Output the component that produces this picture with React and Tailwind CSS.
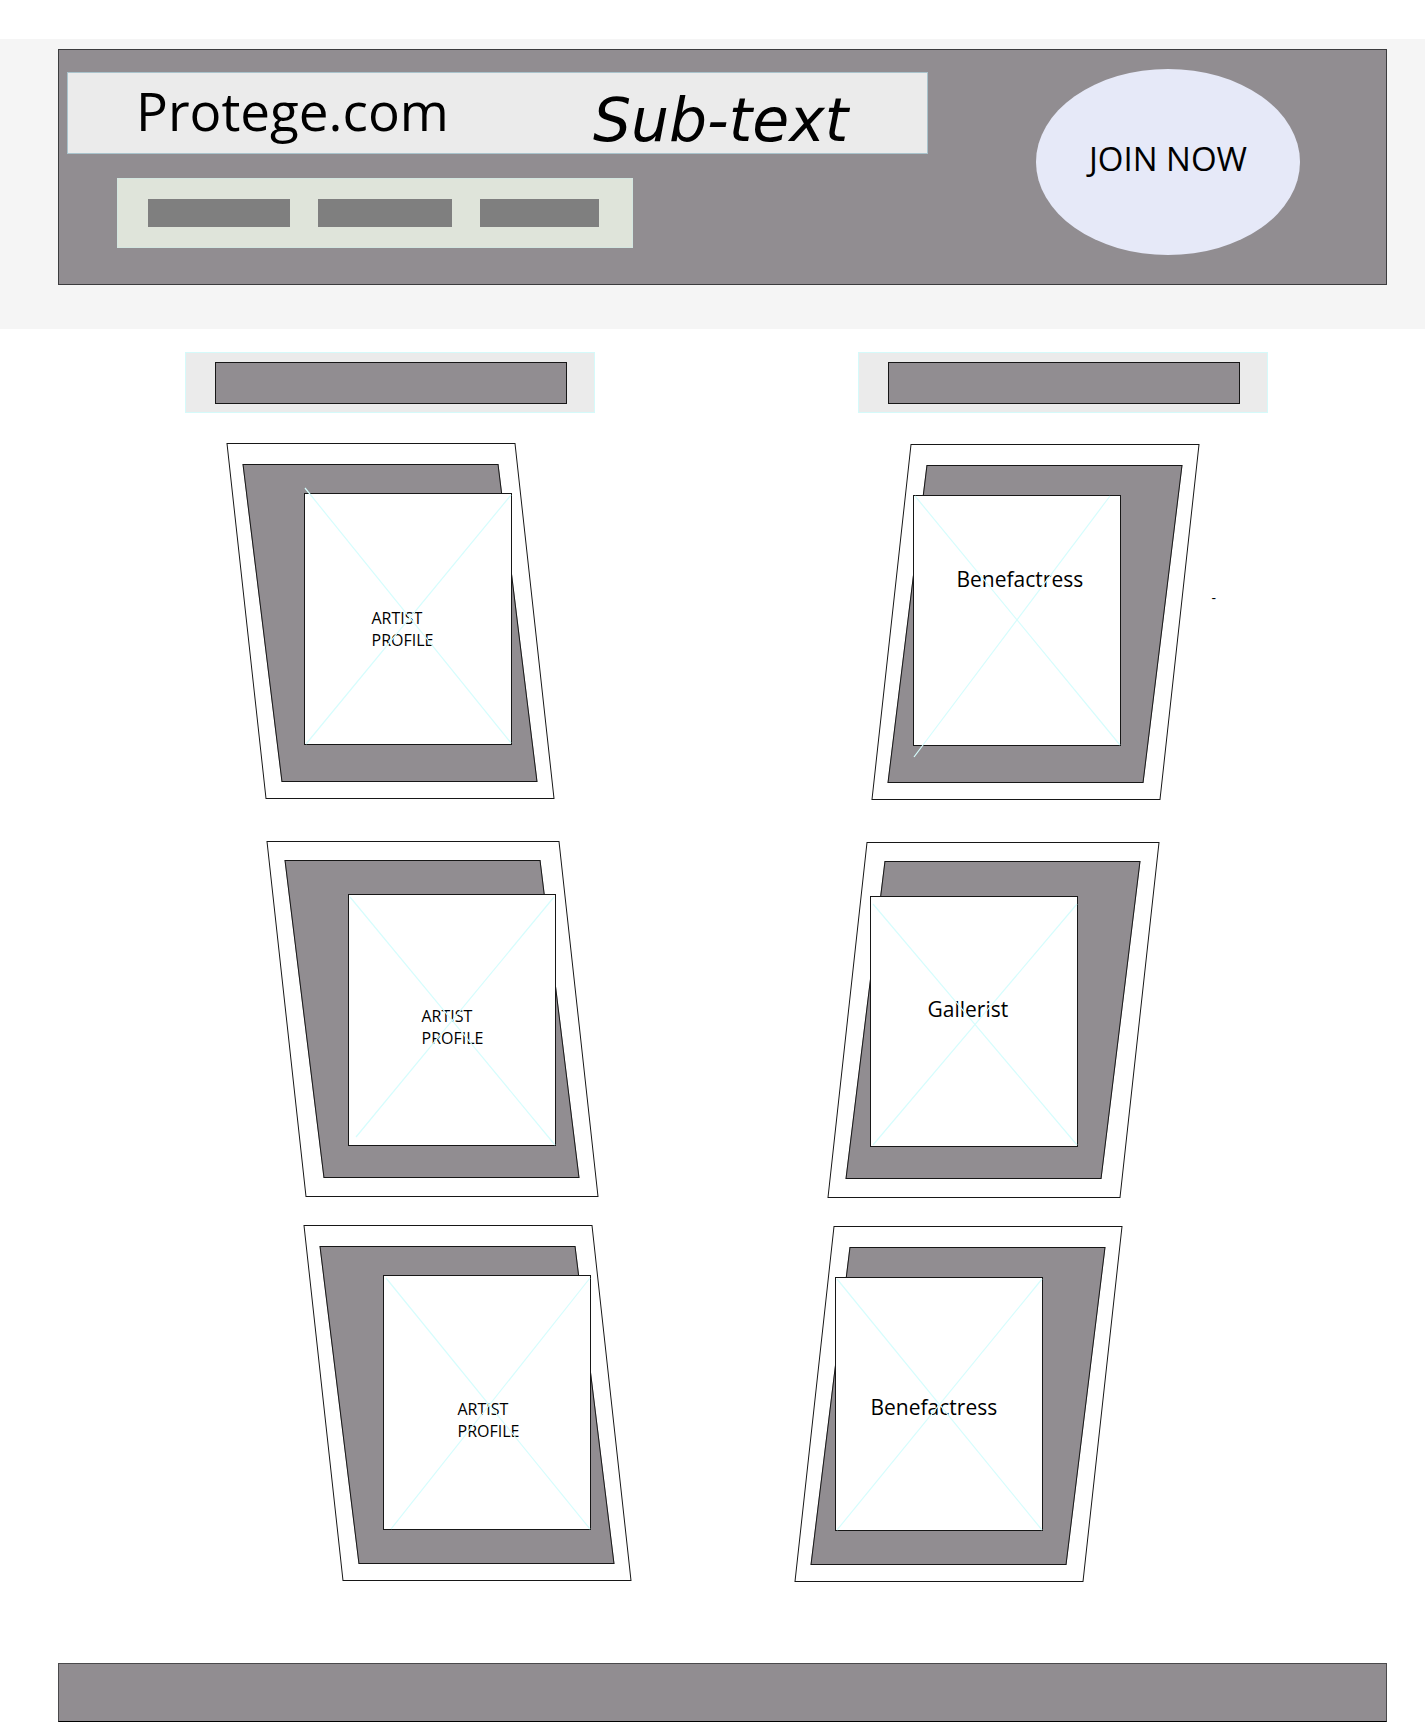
import React from "react";
import clsx from "clsx";

const artists = [
  {
    name: "ARTIST PROFILE",
    slot: "mt-[30px] ml-[61px] w-[289px]",
    panel: "mt-[21px] ml-4",
    sheet: "mt-[50px] ml-[58px] h-[252px]",
    label: "pt-[113px] pl-[67px]",
    lines: [[0, -6, 206, 249], [206, 1, 1, 250]],
  },
  {
    name: "ARTIST PROFILE",
    slot: "mt-[42px] ml-[101px] w-[293px]",
    panel: "mt-[19px] ml-[18px]",
    sheet: "mt-[53px] ml-[62px] h-[252px]",
    label: "pt-[110px] pl-[73px]",
    lines: [[1, 2, 206, 250], [205, 2, 7, 242]],
  },
  {
    name: "ARTIST PROFILE",
    slot: "mt-[28px] ml-[138px] w-[289px]",
    panel: "mt-[21px] ml-4",
    sheet: "mt-[50px] ml-[60px] h-[255px]",
    label: "pt-[122px] pl-[74px]",
    lines: [[2, 2, 206, 253], [206, 2, 7, 253]],
  },
];

const patrons = [
  {
    name: "Benefactress",
    slot: "mt-[31px] ml-[96px] w-[289px]",
    panel: "mt-[21px] ml-4",
    sheet: "mt-[51px] ml-[22px] h-[251px]",
    label: "pt-[69px] pl-[43px]",
    lines: [[1, 0, 206, 249], [196, 0, 0, 261]],
    note: "-",
  },
  {
    name: "Gallerist",
    slot: "mt-[42px] ml-[52px] w-[293px]",
    panel: "mt-[19px] ml-[18px]",
    sheet: "mt-[54px] ml-[23px] h-[251px]",
    label: "pt-[98px] pl-[57px]",
    lines: [[2, 7, 206, 248], [206, 7, 2, 248]],
  },
  {
    name: "Benefactress",
    slot: "mt-[28px] ml-[19px] w-[289px]",
    panel: "mt-[21px] ml-4",
    sheet: "mt-[51px] ml-[21px] h-[254px]",
    label: "pt-[115px] pl-[35px]",
    lines: [[1, 1, 206, 252], [206, 1, 1, 252]],
  },
];

function ProfileCard({ card, mirrored }) {
  return (
    <article className={clsx("relative grid h-[356px]", card.slot)}>
      <div
        className={clsx(
          "col-start-1 row-start-1 border border-neutral-900",
          mirrored ? "skew-x-[-6.27deg]" : "skew-x-[6.27deg]"
        )}
      />
      <div
        className={clsx(
          "col-start-1 row-start-1 h-[318px] w-64 border border-neutral-900 bg-[#918d91]",
          mirrored ? "skew-x-[-7deg]" : "skew-x-[7deg]",
          card.panel
        )}
      />
      <a
        href="#"
        className={clsx(
          "relative col-start-1 row-start-1 block w-[208px] border border-neutral-900 bg-white",
          card.sheet
        )}
      >
        <span
          className={clsx(
            "block",
            card.label,
            mirrored ? "text-[21px] leading-7" : "w-[150px] text-base leading-[22px]"
          )}
        >
          {card.name}
        </span>
        <svg className="absolute inset-0 h-full w-full overflow-visible" aria-hidden="true">
          {card.lines.map(([x1, y1, x2, y2], i) => (
            <line key={i} x1={x1} y1={y1} x2={x2} y2={y2} stroke="#d6fdfd" strokeWidth="1.2" />
          ))}
        </svg>
      </a>
      {card.note && (
        <span className="absolute top-[144px] left-full ml-8 text-sm">{card.note}</span>
      )}
    </article>
  );
}

function SectionBar({ className }) {
  return (
    <div className={clsx("h-[61px] w-[410px] border border-[#d5fafa] bg-[#ebebeb] py-[9px] pr-[27px] pl-[29px]", className)}>
      <div className="h-[42px] border border-neutral-900 bg-[#918d91]" />
    </div>
  );
}

export default function App() {
  return (
    <div className="bg-white font-['Open_Sans',sans-serif] text-black">
      <header className="mt-[39px] bg-[#f5f5f5] pt-[10px] pr-[38px] pb-[44px] pl-[58px]">
        <div className="flex h-[236px] items-start border border-[#3c3c3e] bg-[#918d91] pl-2">
          <div className="flex-1 pt-[22px]">
            <div className="flex h-[82px] items-start border border-[#a9c3cc] bg-[#ebebeb] pl-[68px]">
              <h1 className="pt-[6px] text-[53px] leading-[64px]">Protege.com</h1>
              <p className="ml-[144px] pt-[15px] font-['DejaVu_Sans',sans-serif] text-[60px] leading-[64px] italic">
                Sub-text
              </p>
            </div>
            <nav className="mt-6 ml-[50px] flex h-[70px] w-[516px] items-center gap-7 border border-[#d3e6e0] bg-[#dfe4da] pl-[30px]">
              <a href="#" aria-label="Menu item 1" className="h-7 w-[142px] bg-[#7f7f7f]" />
              <a href="#" aria-label="Menu item 2" className="h-7 w-[134px] bg-[#7f7f7f]" />
              <a href="#" aria-label="Menu item 3" className="h-7 w-[119px] bg-[#7f7f7f]" />
            </nav>
          </div>
          <button
            type="button"
            className="mt-[19px] mr-[86px] ml-[108px] h-[186px] w-[264px] rounded-[50%] bg-[#e6e9f8] pb-[6px] text-[33px]"
          >
            JOIN NOW
          </button>
        </div>
      </header>

      <main className="flex justify-center gap-[164px] pt-[23px] pl-7">
        <section className="w-[446px] shrink-0" aria-label="Artists">
          <SectionBar />
          {artists.map((card, i) => (
            <ProfileCard key={i} card={card} />
          ))}
        </section>
        <section className="w-[474px] shrink-0" aria-label="Patrons">
          <SectionBar className="ml-[63px]" />
          {patrons.map((card, i) => (
            <ProfileCard key={i} card={card} mirrored />
          ))}
        </section>
      </main>

      <footer className="mt-[81px] mr-[38px] ml-[58px] h-[59px] border border-[#4a4a4c] border-b-black bg-[#918d91]" />
    </div>
  );
}
